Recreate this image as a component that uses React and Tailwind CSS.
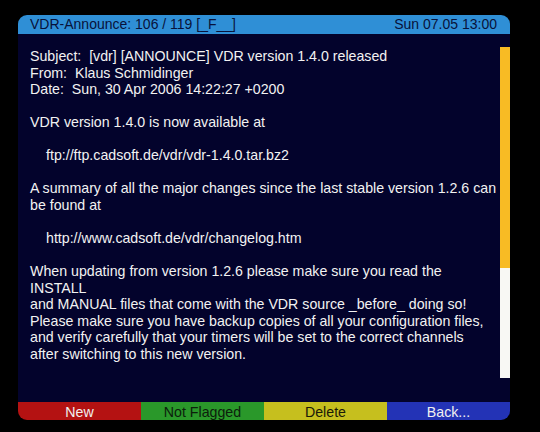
const lines = [
  { t: 'Subject:  [vdr] [ANNOUNCE] VDR version 1.4.0 released' },
  { t: 'From:  Klaus Schmidinger' },
  { t: 'Date:  Sun, 30 Apr 2006 14:22:27 +0200' },
  { t: '' },
  { t: 'VDR version 1.4.0 is now available at' },
  { t: '' },
  { t: 'ftp://ftp.cadsoft.de/vdr/vdr-1.4.0.tar.bz2', indent: true },
  { t: '' },
  { t: 'A summary of all the major changes since the last stable version 1.2.6 can' },
  { t: 'be found at' },
  { t: '' },
  { t: 'http://www.cadsoft.de/vdr/changelog.htm', indent: true },
  { t: '' },
  { t: 'When updating from version 1.2.6 please make sure you read the' },
  { t: 'INSTALL' },
  { t: 'and MANUAL files that come with the VDR source _before_ doing so!' },
  { t: 'Please make sure you have backup copies of all your configuration files,' },
  { t: 'and verify carefully that your timers will be set to the correct channels' },
  { t: 'after switching to this new version.' },
]

export default function App() {
  return (
    <div className="w-[540px] h-[432px] bg-black pt-[15px] pl-[18px] font-['Liberation_Sans',Arial,sans-serif]">
      <div className="w-[492px] flex flex-col">
        <div className="h-[19px] bg-[#2f8fd6] rounded-t-[9px] flex items-center justify-between pl-3 pr-[13px] text-[14px] text-[#08123a]">
          <span>VDR-Announce: 106 / 119 [_F__]</span>
          <span>Sun 07.05 13:00</span>
        </div>
        <div className="h-[368px] bg-[#03032c] flex">
          <div className="flex-1 pl-3 pt-[14px] text-[14.2px] leading-[16.55px] text-[#f2f2f2] whitespace-pre">
            {lines.map((l, i) => (
              <div key={i} className={`h-[16.55px] ${l.indent ? 'pl-4' : ''}`}>{l.t}</div>
            ))}
          </div>
          <div className="w-[10px] mt-[13px] flex flex-col">
            <div className="h-[221px] bg-[#f8bb24]" />
            <div className="h-[110px] bg-[#f8f8f4]" />
          </div>
        </div>
        <div className="h-[18px] grid grid-cols-4 text-[14.2px] rounded-b-[9px] overflow-hidden">
          <div className="bg-[#b41212] text-[#f0f0f0] flex items-center justify-center">New</div>
          <div className="bg-[#2a982a] text-[#0c200c] flex items-center justify-center">Not Flagged</div>
          <div className="bg-[#c6bf1e] text-[#1a1a08] flex items-center justify-center">Delete</div>
          <div className="bg-[#2333b6] text-[#f0f0f0] flex items-center justify-center">Back...</div>
        </div>
      </div>
    </div>
  )
}
